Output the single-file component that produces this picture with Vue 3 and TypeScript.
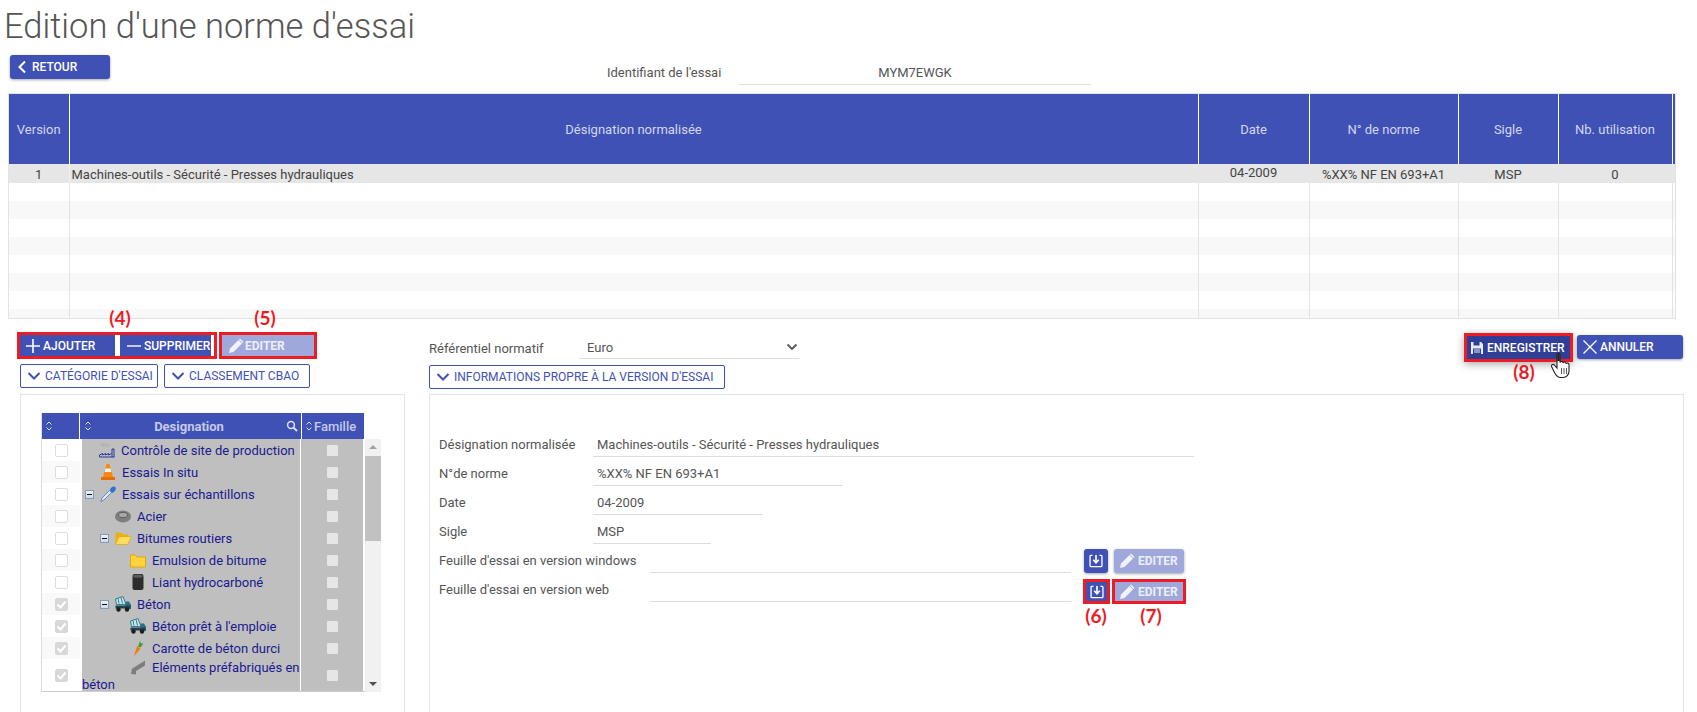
<script setup lang="ts">
interface TreeRow {
  label: string
  icon: string
  indent: number
  minus: boolean
  checked: boolean
  tall?: boolean
}

const headers = ['Version', 'Désignation normalisée', 'Date', 'N° de norme', 'Sigle', 'Nb. utilisation']
const colWidths = [60, 1129, 111, 149, 100, 114, 3]
const emptyRows = [1, 2, 3, 4, 5, 6, 7, 8]

const tree: TreeRow[] = [
  { label: 'Contrôle de site de production', icon: 'factory', indent: 17, minus: false, checked: false },
  { label: 'Essais In situ', icon: 'cone', indent: 18, minus: false, checked: false },
  { label: 'Essais sur échantillons', icon: 'dropper', indent: 3, minus: true, checked: false },
  { label: 'Acier', icon: 'coil', indent: 33, minus: false, checked: false },
  { label: 'Bitumes routiers', icon: 'open', indent: 18, minus: true, checked: false },
  { label: 'Emulsion de bitume', icon: 'folder', indent: 48, minus: false, checked: false },
  { label: 'Liant hydrocarboné', icon: 'barrel', indent: 48, minus: false, checked: false },
  { label: 'Béton', icon: 'truck', indent: 18, minus: true, checked: true },
  { label: 'Béton prêt à l\'emploie', icon: 'truck', indent: 48, minus: false, checked: true },
  { label: 'Carotte de béton durci', icon: 'carrot', indent: 48, minus: false, checked: true },
  { label: 'Eléments préfabriqués en béton', icon: 'beam', indent: 48, minus: false, checked: true, tall: true }
]

const form = [
  { label: 'Désignation normalisée', value: 'Machines-outils - Sécurité - Presses hydrauliques', width: 601 },
  { label: 'N°de norme', value: '%XX% NF EN 693+A1', width: 250 },
  { label: 'Date', value: '04-2009', width: 170 },
  { label: 'Sigle', value: 'MSP', width: 118 }
]
</script>

<template>
  <div class="page">
    <h1 class="title">Edition d'une norme d'essai</h1>

    <div class="top-row">
      <button class="btn retour">
        <svg class="ico" viewBox="0 0 14 14"><path d="M10 1.500 4.500 7l5.500 5.500" fill="none" stroke="#fff" stroke-width="2" /></svg>
        RETOUR
      </button>
      <span class="id-label">Identifiant de l'essai</span>
      <span class="id-value">MYM7EWGK</span>
    </div>

    <div class="table-wrap">
      <table class="versions">
        <colgroup>
          <col v-for="(w, i) in colWidths" :key="i" :style="{ width: w + 'px' }" />
        </colgroup>
        <thead>
          <tr>
            <th v-for="h in headers" :key="h">{{ h }}</th>
            <th></th>
          </tr>
        </thead>
        <tbody>
          <tr class="selected">
            <td class="center">1</td>
            <td class="left">Machines-outils - Sécurité - Presses hydrauliques</td>
            <td class="center date">04-2009</td>
            <td class="center">%XX% NF EN 693+A1</td>
            <td class="center">MSP</td>
            <td class="center">0</td>
            <td></td>
          </tr>
          <tr v-for="r in emptyRows" :key="r" :class="{ alt: r % 2 === 0, cut: r === 8 }">
            <td v-for="c in 7" :key="c"></td>
          </tr>
        </tbody>
      </table>
    </div>

    <div class="lower">
      <div class="left-col">
        <div class="toolbar">
          <div class="hl group">
            <button class="btn flat add">
              <svg class="ico big" viewBox="0 0 16 16"><path d="M8 1v14M1 8h14" stroke="#fff" stroke-width="1.6" /></svg>
              AJOUTER
            </button>
            <button class="btn flat del">
              <svg class="ico big" viewBox="0 0 16 16"><path d="M1 8h14" stroke="#fff" stroke-width="1.4" /></svg>
              SUPPRIMER
            </button>
          </div>
          <div class="hl edit-box">
            <button class="btn flat disabled wide">
              <svg class="ico big" viewBox="0 0 16 16"><path d="M1 15l1-4.500L10.500 2l3.500 3.500L5.500 14z" fill="#f1f2fa" /><path d="M11.500 1l3.500 3.500" stroke="#f1f2fa" stroke-width="1.600" /></svg>
              EDITER
            </button>
          </div>
        </div>
        <div class="collapse-row">
          <button class="outline cat">
            <svg class="chev" viewBox="0 0 14 10"><path d="M1.500 2 7 7.500 12.500 2" fill="none" stroke="#3f51b5" stroke-width="2" /></svg>
            CATÉGORIE D'ESSAI
          </button>
          <button class="outline cbao">
            <svg class="chev" viewBox="0 0 14 10"><path d="M1.500 2 7 7.500 12.500 2" fill="none" stroke="#3f51b5" stroke-width="2" /></svg>
            CLASSEMENT CBAO
          </button>
        </div>

        <div class="panel left-panel">
          <div class="tree-grid">
            <div class="tree-main">
              <div class="tree-head">
                <div class="th-check">
                  <svg class="sort" viewBox="0 0 8 12"><path d="M1.500 4.500 4 2l2.500 2.500M1.500 7.500 4 10l2.500-2.500" fill="none" stroke="#dfe2f4" stroke-width="1" /></svg>
                </div>
                <div class="th-des">
                  <svg class="sort" viewBox="0 0 8 12"><path d="M1.500 4.500 4 2l2.500 2.500M1.500 7.500 4 10l2.500-2.500" fill="none" stroke="#dfe2f4" stroke-width="1" /></svg>
                  <span class="th-text">Designation</span>
                  <svg class="search" viewBox="0 0 12 12"><circle cx="5" cy="5" r="3.400" fill="none" stroke="#dfe2f4" stroke-width="1.500" /><path d="M7.500 7.500 11 11" stroke="#dfe2f4" stroke-width="1.800" /></svg>
                </div>
                <div class="th-fam">
                  <svg class="sort" viewBox="0 0 8 12"><path d="M1.500 4.500 4 2l2.500 2.500M1.500 7.500 4 10l2.500-2.500" fill="none" stroke="#dfe2f4" stroke-width="1" /></svg>
                  <span>Famille</span>
                </div>
              </div>
              <div
                v-for="(row, i) in tree"
                :key="row.label"
                class="tree-row"
                :class="{ tall: row.tall, odd: i % 2 === 1 }"
              >
                <div class="cell-check">
                  <span class="box" :class="{ on: row.checked }">
                    <svg v-if="row.checked" viewBox="0 0 13 13"><path d="M2.500 6.500 5.500 9.500 10.500 3.500" fill="none" stroke="#fff" stroke-width="2" /></svg>
                  </span>
                </div>
                <div class="cell-des">
                  <span class="spacer" :style="{ width: row.indent + 'px' }"></span>
                  <span v-if="row.minus" class="minus"></span>
                  <svg class="tree-ico" viewBox="0 0 16 16">
                    <g v-if="row.icon === 'factory'">
                      <path d="M0.500 15h15M0.500 15v-2l3-1.500v1.500l3-1.500v1.500l3-1.500v1.500l3-1.500M13 15V7h2v8" fill="none" stroke="#27399a" stroke-width="1" />
                      <path d="M1 1h8l3 3-3 1H3z" fill="#b5b5b5" />
                    </g>
                    <g v-else-if="row.icon === 'cone'">
                      <path d="M6.500 0h3l3.500 13H3z" fill="#f48a12" />
                      <path d="M5.500 4.500h5l.9 3.500H4.600z" fill="#f2f2f2" />
                      <path d="M1 13h14v3H1z" fill="#e66e0a" />
                    </g>
                    <g v-else-if="row.icon === 'dropper'">
                      <path d="M.8 15.500 2 12 9.500 4.500l2 2L4 14z" fill="#dbe8f8" stroke="#4a78c8" stroke-width=".8" />
                      <path d="M10 4C10.500 2 12 .5 14 .5s2 2 1.500 3.500S13 6.500 12 7z" fill="#2f6fd8" />
                    </g>
                    <g v-else-if="row.icon === 'coil'">
                      <ellipse cx="8" cy="8.500" rx="8" ry="6" fill="#7f7f7f" />
                      <ellipse cx="8" cy="7" rx="4.500" ry="2.600" fill="#a8a8a8" stroke="#5f5f5f" />
                    </g>
                    <g v-else-if="row.icon === 'open'">
                      <path d="M.5 14V2.500h5.500l1.500 2h6v2.500H4L.5 14z" fill="#e9b30e" />
                      <path d="M.5 14.500 4 6.500h12l-3 8z" fill="#ffdc5c" stroke="#e0a800" stroke-width=".7" />
                    </g>
                    <g v-else-if="row.icon === 'folder'">
                      <path d="M.5 15V3h5l1.500 2h8.500v10z" fill="#ffd23f" stroke="#e6a700" />
                    </g>
                    <g v-else-if="row.icon === 'barrel'">
                      <rect x="2.500" y="0" width="11" height="16" rx="2" fill="#2c2c2c" />
                      <ellipse cx="8" cy="2.200" rx="5" ry="1.600" fill="#5b5b5b" />
                    </g>
                    <g v-else-if="row.icon === 'truck'">
                      <path d="M.5 3 8 .5l3 8H1.500z" fill="#cfe3ea" stroke="#2c7f95" stroke-width="1" />
                      <path d="M3 2.500l1 5M6 1.500l1.500 6" stroke="#2c7f95" stroke-width="1" />
                      <path d="M10.500 5.500h3.500l2 3.500V13h-5.500z" fill="#2a6f88" />
                      <path d="M0.500 9.500h15V12.500H.5z" fill="#24414f" />
                      <circle cx="3.500" cy="13.500" r="2.200" fill="#1d1d1d" />
                      <circle cx="12" cy="13.500" r="2.200" fill="#1d1d1d" />
                    </g>
                    <g v-else-if="row.icon === 'carrot'">
                      <path d="M4 16 7 6l3.500 3z" fill="#ef7d17" />
                      <path d="M8 6.500 10 1l1 2.500 2.500 0-3 4z" fill="#4c9a2a" />
                    </g>
                    <g v-else>
                      <path d="M1 15 2 9.500 15 1.500v5L6 12v3.500z" fill="#7d7d7d" />
                      <path d="M2 9.500 15 1.500 14 .5 2 7.500z" fill="#bdbdbd" />
                    </g>
                  </svg>
                  <span class="tree-text">{{ row.label }}</span>
                </div>
                <div class="cell-fam"><span class="fam-box"></span></div>
              </div>
            </div>
            <div class="scrollbar">
              <span class="arrow up"></span>
              <span class="thumb"></span>
              <span class="arrow down"></span>
            </div>
          </div>
        </div>
      </div>

      <div class="right-col">
        <div class="right-top">
          <span class="ref-label">Référentiel normatif</span>
          <div class="select">
            <span>Euro</span>
            <svg class="sel-chev" viewBox="0 0 12 8"><path d="M1.500 1.500 6 6l4.500-4.500" fill="none" stroke="#555" stroke-width="1.800" /></svg>
          </div>
          <div class="actions">
            <div class="hl save-box">
              <button class="btn flat save">
                <svg class="ico save-ico" viewBox="0 0 14 14"><path d="M1 1h10l2 2v10H1z" fill="#e9ebf7" /><path d="M3.500 1h6v3.500h-6zM3 7.500h8v5.500H3z" fill="#2f3e96" /><path d="M4 9h6M4 11h6" stroke="#e9ebf7" /></svg>
                ENREGISTRER
              </button>
            </div>
            <button class="btn cancel">
              <svg class="ico big" viewBox="0 0 16 16"><path d="M1.500 1.500l13 13M14.500 1.500l-13 13" stroke="#fff" stroke-width="1.300" /></svg>
              ANNULER
            </button>
          </div>
        </div>
        <button class="outline info">
          <svg class="chev" viewBox="0 0 14 10"><path d="M1.500 2 7 7.500 12.500 2" fill="none" stroke="#3f51b5" stroke-width="2" /></svg>
          INFORMATIONS PROPRE À LA VERSION D'ESSAI
        </button>

        <div class="panel right-panel">
          <div v-for="f in form" :key="f.label" class="form-row">
            <span class="form-label">{{ f.label }}</span>
            <span class="form-value" :style="{ width: f.width + 'px' }">{{ f.value }}</span>
          </div>
          <div class="form-row file-row">
            <span class="form-label wide-label">Feuille d'essai en version windows</span>
            <span class="form-value file"></span>
            <button class="btn square">
              <svg class="ico import" viewBox="0 0 16 16"><path d="M4 1.500H2.200a1 1 0 0 0-1 1v11a1 1 0 0 0 1 1h11.600a1 1 0 0 0 1-1v-11a1 1 0 0 0-1-1H12" fill="none" stroke="#fff" stroke-width="1.500" /><path d="M8 1v8.500M4.800 6.500 8 10l3.200-3.500" fill="none" stroke="#fff" stroke-width="1.900" /></svg>
            </button>
            <button class="btn disabled edit-small">
              <svg class="ico big" viewBox="0 0 16 16"><path d="M1 15l1-4.500L10.500 2l3.500 3.500L5.500 14z" fill="#f1f2fa" /><path d="M11.500 1l3.500 3.500" stroke="#f1f2fa" stroke-width="1.600" /></svg>
              EDITER
            </button>
          </div>
          <div class="form-row file-row">
            <span class="form-label wide-label">Feuille d'essai en version web</span>
            <span class="form-value file"></span>
            <div class="hl square-box">
              <button class="btn flat square-in">
                <svg class="ico import" viewBox="0 0 16 16"><path d="M4 1.500H2.200a1 1 0 0 0-1 1v11a1 1 0 0 0 1 1h11.600a1 1 0 0 0 1-1v-11a1 1 0 0 0-1-1H12" fill="none" stroke="#fff" stroke-width="1.500" /><path d="M8 1v8.500M4.800 6.500 8 10l3.200-3.500" fill="none" stroke="#fff" stroke-width="1.900" /></svg>
              </button>
            </div>
            <div class="hl edit-small-box">
              <button class="btn flat disabled edit-in">
                <svg class="ico big" viewBox="0 0 16 16"><path d="M1 15l1-4.500L10.500 2l3.500 3.500L5.500 14z" fill="#f1f2fa" /><path d="M11.500 1l3.500 3.500" stroke="#f1f2fa" stroke-width="1.600" /></svg>
                EDITER
              </button>
            </div>
          </div>
        </div>
      </div>
    </div>

    <span class="note n4">(4)</span>
    <span class="note n5">(5)</span>
    <span class="note n6">(6)</span>
    <span class="note n7">(7)</span>
    <span class="note n8">(8)</span>
    <svg class="hand" viewBox="0 0 20 27">
      <path d="M6 2.500c0-2 3-2 3 0v8c.5-1.500 3-1.500 3 .5.500-1.500 3-1.300 3 .7.500-1.200 3-1 3 1v6.300c0 3.500-2.500 6.500-6 6.500h-2.500c-3 0-4.500-2-6-5L.8 15c-1-2 1-3.300 2.500-2L6 16z" fill="#fff" stroke="#222" stroke-width="1.100" />
      <path d="M6.200 2.500c0-1.800 2.600-1.800 2.600 0V9H6.200z" fill="#222" />
      <path d="M10.500 16v6M13 16v6M15.500 16v6" stroke="#333" stroke-width=".8" />
    </svg>
  </div>
</template>

<style scoped>
* {
  box-sizing: border-box;
}
.page {
  position: relative;
  width: 1697px;
  height: 712px;
  overflow: hidden;
  background: #fff;
  font-family: Roboto, "Liberation Sans", sans-serif;
  font-size: 13px;
  color: #555;
}
.title {
  margin: 0;
  height: 55px;
  padding: 3px 0 0 4px;
  font-size: 34.500px;
  line-height: 46px;
  font-weight: 300;
  color: #555;
}
.top-row {
  display: flex;
  align-items: flex-start;
  height: 38px;
  padding-left: 10px;
}
.btn {
  display: inline-flex;
  align-items: center;
  border: 0;
  padding: 0;
  margin: 0;
  background: #3f51b5;
  color: #fff;
  font-family: Roboto, "Liberation Sans", sans-serif;
  font-size: 12px;
  font-weight: 500;
  white-space: nowrap;
  border-radius: 3px;
  box-shadow: 0 1px 3px rgba(0, 0, 0, 0.35);
}
.btn.flat {
  border-radius: 0;
  box-shadow: none;
}
.ico {
  width: 14px;
  height: 14px;
  flex: none;
}
.ico.big {
  width: 16px;
  height: 16px;
}
.retour {
  width: 100px;
  height: 24px;
  padding-left: 5px;
  gap: 3px;
}
.id-label {
  margin-left: 497px;
  width: 132px;
  padding-top: 6px;
  line-height: 24px;
}
.id-value {
  width: 352px;
  height: 30px;
  padding-top: 6px;
  line-height: 24px;
  text-align: center;
  border-bottom: 1px solid #ddd;
}
.table-wrap {
  margin-left: 8px;
  width: 1668px;
  height: 226px;
  border: 1px solid #e3e3e3;
  overflow: hidden;
}
.versions {
  table-layout: fixed;
  border-collapse: collapse;
  width: 1666px;
  font-size: 13px;
  color: #444;
}
.versions th {
  height: 70px;
  padding: 0;
  background: #3f51b5;
  color: #d3d7f0;
  font-weight: 400;
  font-size: 13px;
  border-left: 1px solid #fff;
}
.versions th:first-child {
  border-left: 0;
}
.versions td {
  height: 18px;
  padding: 0;
  border-left: 1px solid #e3e3e3;
  line-height: 17px;
}
.versions td:first-child {
  border-left: 0;
}
.versions tr.selected td {
  height: 19px;
  padding-top: 1px;
  background: #e6e6e6;
  border-left-color: #e6e6e6;
}
.versions tr.selected td.date {
  padding-top: 0;
  vertical-align: top;
}
.versions tr.selected td:nth-child(2) {
  border-left: 1px solid #f2f2f2;
}
.versions tr.alt td {
  background: #f8f8f8;
}
.versions tr.cut td {
  height: 9px;
}
.versions .center {
  text-align: center;
}
.versions .left {
  padding-left: 2px;
}
.lower {
  display: grid;
  grid-template-columns: 429px 1256px;
  margin-top: 13px;
}
.left-col {
  padding-left: 17px;
}
.toolbar {
  display: flex;
  gap: 2px;
  height: 27px;
}
.hl {
  border: 3px solid #ed1c24;
}
.group {
  display: flex;
  width: 200px;
  padding-right: 3px;
  padding-left: 0;
  background: #fff;
}
.add {
  width: 95px;
  height: 21px;
  padding-left: 5px;
  gap: 2px;
}
.del {
  width: 91px;
  height: 21px;
  margin-left: 5px;
  padding-left: 6px;
  gap: 2px;
}
.edit-box {
  width: 98px;
}
.wide {
  width: 92px;
  height: 21px;
  padding-left: 6px;
  gap: 1px;
}
.disabled {
  background: #9fa8da;
  color: #eceefa;
  font-weight: 700;
}
.collapse-row {
  display: flex;
  gap: 6px;
  padding-left: 3px;
  margin-top: 5px;
}
.outline {
  display: inline-flex;
  align-items: center;
  height: 24px;
  padding: 0 0 0 6px;
  gap: 4px;
  border: 1px solid #3f51b5;
  border-radius: 2px;
  background: #fff;
  color: #3f51b5;
  font-family: Roboto, "Liberation Sans", sans-serif;
  font-size: 12px;
  white-space: nowrap;
}
.chev {
  width: 14px;
  height: 10px;
  flex: none;
}
.cat {
  width: 138px;
}
.cbao {
  width: 146px;
}
.panel {
  border: 1px solid #e3e3e3;
  margin-top: 6px;
  height: 340px;
}
.left-panel {
  margin-left: 3px;
  width: 385px;
  padding: 18px 0 0 20px;
}
.tree-grid {
  display: flex;
  align-items: flex-start;
}
.tree-main {
  width: 324px;
  border-bottom: 1px solid #ccc;
  border-left: 1px solid #ddd;
}
.tree-head {
  display: flex;
  height: 26px;
  background: #3f51b5;
  color: #c5cae9;
  font-weight: 700;
}
.th-check {
  width: 38px;
  display: flex;
  align-items: center;
  padding-left: 3px;
  border-right: 1px solid #fff;
}
.sort {
  width: 8px;
  height: 12px;
  flex: none;
}
.th-des {
  width: 222px;
  display: flex;
  align-items: center;
  padding: 0 3px 0 4px;
  border-right: 1px solid #fff;
}
.th-text {
  flex: 1;
  text-align: center;
  font-size: 13px;
}
.search {
  width: 12px;
  height: 12px;
}
.th-fam {
  width: 63px;
  display: flex;
  align-items: center;
  gap: 1px;
  padding-left: 3px;
  font-size: 13px;
  font-weight: 500;
  border-right: 1px solid #fff;
}
.tree-row {
  display: flex;
  height: 22px;
}
.tree-row.tall {
  height: 32px;
}
.cell-check {
  width: 39px;
  display: flex;
  align-items: center;
  justify-content: center;
  background: #fff;
  border-right: 1px solid #e3e3e3;
}
.tree-row.odd .cell-check {
  background: #f9f9f9;
}
.box {
  width: 13px;
  height: 13px;
  border: 1px solid #ddd;
  border-radius: 2px;
  background: #fff;
}
.box svg {
  display: block;
  width: 13px;
  height: 13px;
  margin: -1px;
}
.box.on {
  background: #d8d8d8;
  border-color: #d8d8d8;
}
.cell-des {
  width: 221px;
  background: #bfbfbf;
  padding-left: 0;
  border-left: 2px solid #fff;
  margin-left: -1px;
  border-right: 1px solid #fff;
  color: #1a1a8f;
  font-size: 13px;
  line-height: 17px;
  overflow: hidden;
}
.tree-row:not(.tall) .cell-des {
  padding-top: 3px;
}
.spacer {
  display: inline-block;
  height: 1px;
}
.minus {
  display: inline-block;
  width: 9px;
  height: 9px;
  margin-right: 6px;
  background: linear-gradient(#eef2f7, #cfd9e6);
  border: 1px solid #7f9db9;
  position: relative;
  vertical-align: 0;
}
.minus::after {
  content: "";
  position: absolute;
  left: 1px;
  right: 1px;
  top: 3px;
  height: 1px;
  background: #111;
}
.tree-ico {
  width: 16px;
  height: 16px;
  vertical-align: -3px;
  margin-right: 6px;
}
.cell-fam {
  width: 62px;
  background: #bfbfbf;
  display: flex;
  align-items: center;
  justify-content: center;
  margin-right: 1px;
}
.fam-box {
  width: 11px;
  height: 11px;
  border-radius: 1px;
  background: #e6e6e6;
}
.scrollbar {
  position: relative;
  width: 16px;
  height: 253px;
  margin-top: 26px;
  background: #f1f1f1;
}
.thumb {
  position: absolute;
  left: 0;
  right: 0;
  top: 17px;
  height: 85px;
  background: #c1c1c1;
}
.arrow {
  position: absolute;
  left: 4px;
  width: 0;
  height: 0;
  border-left: 4px solid transparent;
  border-right: 4px solid transparent;
}
.arrow.up {
  top: 6px;
  border-bottom: 4px solid #a3a3a3;
}
.arrow.down {
  bottom: 6px;
  border-top: 4px solid #505050;
}
.right-top {
  display: flex;
  align-items: flex-start;
  height: 33px;
}
.ref-label {
  width: 150px;
  padding-top: 7px;
  line-height: 20px;
}
.select {
  display: flex;
  align-items: center;
  justify-content: space-between;
  width: 220px;
  height: 27px;
  padding: 4px 1px 0 8px;
  border-bottom: 1px solid #ddd;
}
.sel-chev {
  width: 12px;
  height: 8px;
}
.actions {
  display: flex;
  align-items: flex-start;
  gap: 4px;
  margin-left: 665px;
  margin-top: 1px;
}
.save-box {
  width: 109px;
  height: 29px;
  box-shadow: 0 2px 8px rgba(0, 0, 0, 0.35);
}
.save {
  width: 103px;
  height: 23px;
  background: #2f3e96;
  padding-left: 3px;
  gap: 3px;
}
.cancel {
  width: 106px;
  height: 24px;
  margin-top: 2px;
  padding-left: 5px;
  gap: 2px;
}
.info {
  width: 296px;
}
.right-panel {
  margin-top: 5px;
  width: 1255px;
  padding: 33px 0 0 9px;
}
.form-row {
  display: flex;
  height: 29px;
  align-items: flex-start;
}
.form-label {
  width: 154px;
  line-height: 34px;
}
.form-value {
  height: 29px;
  padding-left: 4px;
  line-height: 34px;
  border-bottom: 1px solid #ddd;
}
.wide-label {
  width: 211px;
}
.file {
  width: 421px;
}
.square {
  justify-content: center;
  width: 24px;
  height: 24px;
  margin: 5px 0 0 13px;
}
.edit-small {
  width: 70px;
  height: 24px;
  margin: 5px 0 0 6px;
  padding-left: 5px;
  gap: 3px;
}
.square-box {
  width: 27px;
  height: 25px;
  margin: 6px 0 0 12px;
}
.square-in {
  justify-content: center;
  width: 21px;
  height: 19px;
}
.edit-small-box {
  width: 74px;
  height: 25px;
  margin: 6px 0 0 2px;
}
.edit-in {
  width: 68px;
  height: 19px;
  padding-left: 4px;
  gap: 3px;
}
.note {
  position: absolute;
  color: #ed1c24;
  font-family: Lato, "Liberation Sans", sans-serif;
  font-size: 19px;
  font-weight: 700;
  line-height: 20px;
  transform: translateX(-50%);
}
.n4 { left: 120px; top: 308px; }
.n5 { left: 265px; top: 308px; }
.n6 { left: 1096px; top: 606px; }
.n7 { left: 1151px; top: 606px; }
.n8 { left: 1524px; top: 362px; }
.hand {
  position: absolute;
  left: 1551px;
  top: 352px;
  width: 20px;
  height: 27px;
}
</style>
